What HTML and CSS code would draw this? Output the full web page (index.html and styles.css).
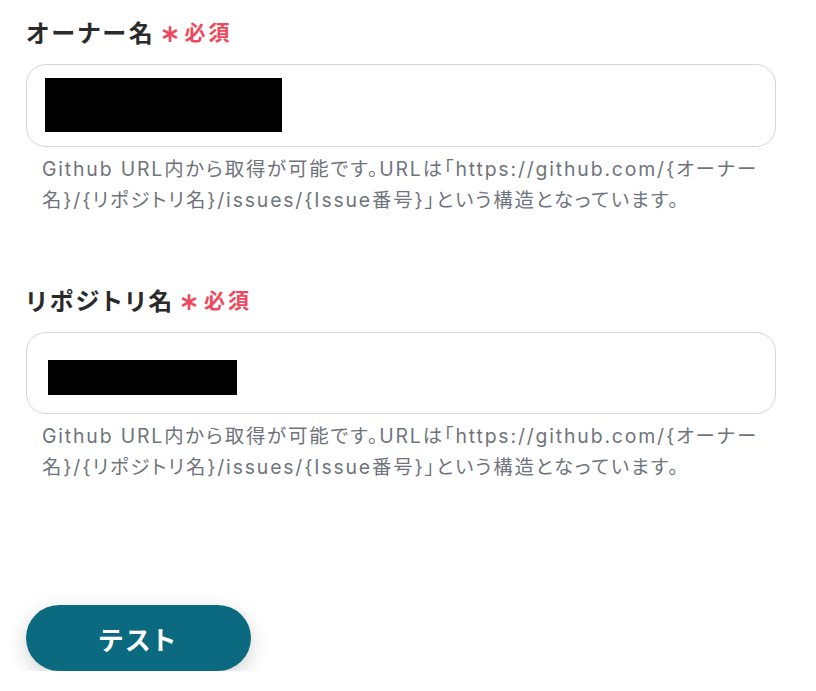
FILE: index.html
```html
<!DOCTYPE html>
<html lang="ja">
<head>
<meta charset="utf-8">
<link rel="stylesheet" href="styles.css">
</head>
<body>
<div class="form">
  <div class="field">
    <div class="label"><span class="label-text">オーナー名</span><svg class="req-star" viewBox="0 0 16 16" width="18" height="18"><path d="M8 1v14M1.9 4.5l12.2 7M1.9 11.5l12.2-7" stroke="#f0475d" stroke-width="2.4" stroke-linecap="butt" fill="none"/></svg><span class="req">必須</span></div>
    <div class="input input-owner"><div class="redact redact-owner"></div></div>
    <p class="help">Github URL内から取得が可能です。URLは「https://github.com/{オーナー名}/{リポジトリ名}/issues/{Issue番号}」という構造となっています。</p>
  </div>
  <div class="field field-repo">
    <div class="label"><span class="label-text">リポジトリ名</span><svg class="req-star" viewBox="0 0 16 16" width="18" height="18"><path d="M8 1v14M1.9 4.5l12.2 7M1.9 11.5l12.2-7" stroke="#f0475d" stroke-width="2.4" stroke-linecap="butt" fill="none"/></svg><span class="req">必須</span></div>
    <div class="input input-repo"><div class="redact redact-repo"></div></div>
    <p class="help">Github URL内から取得が可能です。URLは「https://github.com/{オーナー名}/{リポジトリ名}/issues/{Issue番号}」という構造となっています。</p>
  </div>
  <div class="actions">
    <button class="btn">テスト</button>
  </div>
</div>
</body>
</html>
```
FILE: styles.css
```css
html, body {
  margin: 0;
  padding: 0;
  background: #ffffff;
}
body {
  font-family: Inter, "Noto Sans CJK JP", sans-serif;
  font-feature-settings: "palt";
  color: #2b2b2b;
}
.form {
  padding: 12px 0 0 26px;
  width: 750px;
}
.label {
  display: flex;
  align-items: center;
  height: 38px;
}
.label-text {
  font-size: 24px;
  font-weight: 700;
  letter-spacing: 2.8px;
  color: #2a2a2a;
}
.req-star {
  display: block;
  margin-left: 5px;
  margin-top: 5px;
}
.req {
  color: #f0475d;
  font-size: 21px;
  font-weight: 700;
  letter-spacing: 3px;
  margin-left: 6px;
}
.input {
  margin-top: 14px;
  box-sizing: border-box;
  width: 750px;
  border: 1px solid #d3d6dc;
  border-radius: 20px;
  background: #fff;
}
.input-owner {
  height: 83px;
  padding: 13px 0 0 18px;
}
.input-repo {
  height: 82px;
  padding: 27px 0 0 21px;
}
.redact {
  background: #000;
}
.redact-owner {
  width: 237px;
  height: 54px;
}
.redact-repo {
  width: 189px;
  height: 35px;
}
.help {
  margin: 7px 0 0 16px;
  width: 730px;
  font-size: 19.4px;
  line-height: 31px;
  letter-spacing: 1.85px;
  color: #6f747c;
}
.field-repo {
  margin-top: 64px;
}
.actions {
  margin-top: 122px;
}
.btn {
  width: 225px;
  height: 66px;
  border: none;
  border-radius: 33px;
  background: #0b6980;
  color: #fff;
  font-family: Inter, "Noto Sans CJK JP", sans-serif;
  font-feature-settings: "palt";
  font-size: 26px;
  font-weight: 700;
  letter-spacing: 3px;
  box-shadow: 0 6px 20px rgba(0, 0, 0, 0.18);
  padding: 0;
}
```
